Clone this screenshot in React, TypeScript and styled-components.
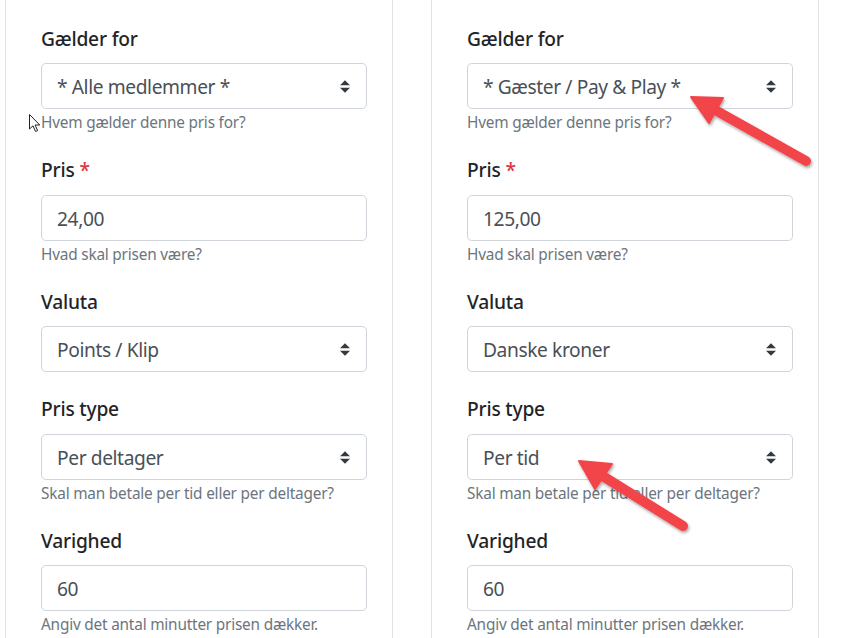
import * as React from "react";
import styled, { createGlobalStyle } from "styled-components";

const GlobalStyle = createGlobalStyle`
    html, body {
        margin: 0;
        padding: 0;
        background: #fff;
    }
    body {
        font-family: "Noto Sans", "Open Sans", sans-serif;
        color: #212529;
    }
`;

const Page = styled.div`
    position: relative;
    display: flex;
    gap: 38px;
    padding-left: 5px;
    height: 638px;
    width: 856px;
    overflow: hidden;
    box-sizing: border-box;
`;

const Card = styled.div`
    width: 388px;
    flex: none;
    box-sizing: border-box;
    border-left: 1px solid #dfe2e6;
    border-right: 1px solid #dfe2e6;
    padding: 25px 25px 0 35px;
    background: #fff;
`;

const FormGroup = styled.div<{ $gap: number }>`
    margin-bottom: ${p => p.$gap}px;
`;

const Label = styled.label`
    display: block;
    font-size: 19.2px;
    font-weight: 500;
    line-height: 28.8px;
    margin-bottom: 9.6px;
    letter-spacing: -0.2px;
    color: #212529;
`;

const Required = styled.span`
    color: #dc3545;
    margin-left: 5px;
`;

const Control = styled.div`
    display: flex;
    align-items: center;
    justify-content: space-between;
    height: 46px;
    box-sizing: border-box;
    padding: 1px 16px 0 15px;
    border: 1px solid #ced4da;
    border-radius: 4.8px;
    font-size: 19.2px;
    letter-spacing: -0.4px;
    color: #495057;
    background: #fff;
`;

const Help = styled.small`
    display: block;
    margin-top: 2px;
    font-size: 15.36px;
    line-height: 23px;
    letter-spacing: -0.2px;
    color: #6c757d;
`;

const Overlay = styled.svg`
    position: absolute;
    left: 0;
    top: 0;
    pointer-events: none;
`;

const SelectArrows = () => (
    <svg width="10" height="13" viewBox="0 0 4 5">
        <path d="M2 0L0 2h4zm0 5L0 3h4z" fill="#343a40" />
    </svg>
);

type Field = {
    label: string;
    value: string;
    select?: boolean;
    required?: boolean;
    help?: string;
    gap: number;
};

const leftFields: Field[] = [
    { label: "Gælder for", value: "* Alle medlemmer *", select: true, help: "Hvem gælder denne pris for?", gap: 22 },
    { label: "Pris", value: "24,00", required: true, help: "Hvad skal prisen være?", gap: 22 },
    { label: "Valuta", value: "Points / Klip", select: true, gap: 23 },
    { label: "Pris type", value: "Per deltager", select: true, help: "Skal man betale per tid eller per deltager?", gap: 22 },
    { label: "Varighed", value: "60", help: "Angiv det antal minutter prisen dækker.", gap: 22 },
];

const rightFields: Field[] = [
    { label: "Gælder for", value: "* Gæster / Pay & Play *", select: true, help: "Hvem gælder denne pris for?", gap: 22 },
    { label: "Pris", value: "125,00", required: true, help: "Hvad skal prisen være?", gap: 22 },
    { label: "Valuta", value: "Danske kroner", select: true, gap: 23 },
    { label: "Pris type", value: "Per tid", select: true, help: "Skal man betale per tid eller per deltager?", gap: 22 },
    { label: "Varighed", value: "60", help: "Angiv det antal minutter prisen dækker.", gap: 22 },
];

const PriceCard: React.FC<{ fields: Field[] }> = ({ fields }) => (
    <Card>
        {fields.map(f => (
            <FormGroup key={f.label} $gap={f.gap}>
                <Label>
                    {f.label}
                    {f.required && <Required>*</Required>}
                </Label>
                <Control>
                    <span>{f.value}</span>
                    {f.select && <SelectArrows />}
                </Control>
                {f.help && <Help>{f.help}</Help>}
            </FormGroup>
        ))}
    </Card>
);

// red annotation arrow: shaft from tail to neck, triangle head at tip
const Arrow: React.FC<{ tip: [number, number]; a: [number, number]; b: [number, number]; tail: [number, number] }> = ({ tip, a, b, tail }) => {
    const neck: [number, number] = [(a[0] + b[0]) / 2, (a[1] + b[1]) / 2];
    return (
        <g filter="url(#shadow)">
            <line x1={tail[0]} y1={tail[1]} x2={neck[0]} y2={neck[1]} stroke="#f24448" strokeWidth={10} strokeLinecap="round" />
            <polygon points={`${tip[0]},${tip[1]} ${a[0]},${a[1]} ${b[0]},${b[1]}`} fill="#f24448" stroke="#f24448" strokeWidth={2} strokeLinejoin="round" />
        </g>
    );
};

export default function App() {
    return (
        <>
            <GlobalStyle />
            <Page>
                <PriceCard fields={leftFields} />
                <PriceCard fields={rightFields} />
                <Overlay width={856} height={638}>
                    <defs>
                        <filter id="shadow" x="-20%" y="-20%" width="140%" height="140%">
                            <feDropShadow dx="1" dy="2" stdDeviation="1.5" floodColor="#000" floodOpacity="0.35" />
                        </filter>
                    </defs>
                    <Arrow tip={[691, 97]} a={[723, 98]} b={[709, 123]} tail={[806, 161]} />
                    <Arrow tip={[579, 461]} a={[612, 464]} b={[595, 489]} tail={[683, 526]} />
                    <path
                        d="M29.5 114.5 L29.5 129 L33 125.8 L35.6 131.5 L37.6 130.6 L35.1 125 L39.8 125 Z"
                        fill="#fff"
                        stroke="#222"
                        strokeWidth={1}
                        strokeLinejoin="round"
                    />
                </Overlay>
            </Page>
        </>
    );
}
